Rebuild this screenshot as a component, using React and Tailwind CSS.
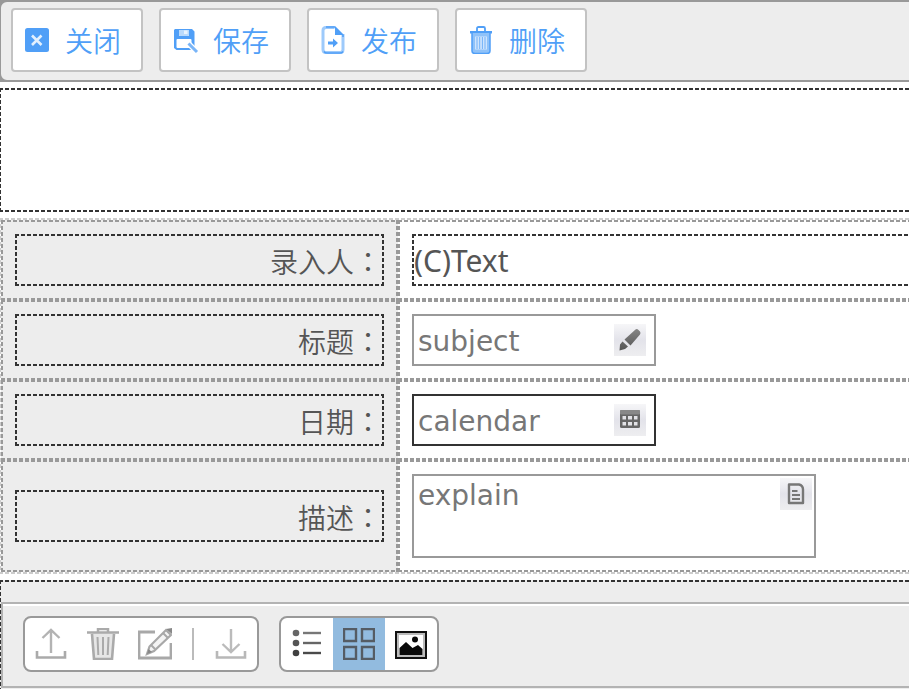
import React from "react";

const blue = "#509ff7";

function CloseIcon() {
  return (
    <svg width="24" height="24" viewBox="0 0 24 24" aria-hidden="true">
      <rect width="24" height="24" rx="2.5" fill={blue} />
      <path d="M7 7.5l9.5 9.5M16.500 7.500L7 17" stroke="#e3f0fe" strokeWidth="2.6" />
    </svg>
  );
}

function SaveIcon() {
  return (
    <svg width="24" height="24" viewBox="0 0 24 24" className="overflow-visible" aria-hidden="true">
      <path fill={blue} fillRule="evenodd" d="M2 1h17l2.500 2.500V19l-1 3H3.500L1 20V2zM6 2.500v4.500q0 1 1 1h8q1 0 1-1V2.500zM3.500 12v7q0 1 1 1h13q1 0 1-1v-7q0-1-1-1h-13q-1 0-1 1z" />
      <path d="M6 2h10v5q0 1-1 1H7q-1 0-1-1z" fill="#b9dafc" />
      <rect x="11" y="2.500" width="3.500" height="3.500" fill="#e8f3fe" />
      <path d="M14 14l10.500 10.500" stroke="#fff" strokeWidth="5.500" />
      <path d="M15.500 15.500l8.500 8.500" stroke="#79b5f8" strokeWidth="3" />
    </svg>
  );
}

function PublishIcon() {
  return (
    <svg width="24" height="28" viewBox="0 0 24 28" fill="none" aria-hidden="true">
      <path d="M13.500 1.500H5q-3 0-3 3v19q0 3 3 3h14q3 0 3-3V8" stroke="#9dcafb" strokeWidth="3" />
      <path d="M5 1h9l8 8v2M3 25.500q1 1.500 3 1.500h13q2 0 3-1.500" stroke={blue} strokeWidth="1.500" />
      <path d="M14 1v8h8z" fill={blue} />
      <path d="M7 15.500h5V12.500l5 4.500-5 4.500v-3H7z" fill={blue} />
    </svg>
  );
}

function DeleteIcon() {
  return (
    <svg width="24" height="28" viewBox="0 0 24 28" fill="none" aria-hidden="true">
      <path d="M8 5V2.500Q8 1 9.500 1h5Q16 1 16 2.500V5" stroke={blue} strokeWidth="1.800" />
      <path d="M1 5h22v2.500H1z" fill={blue} />
      <path d="M3 7h18v18q0 3-3 3H6q-3 0-3-3z" fill="#8fc2f9" />
      <path d="M3 7v18q0 2.500 3 2.500h12q3 0 3-2.500V7" stroke={blue} strokeWidth="1.500" />
      <path d="M6 10.500h12v13H6z" fill="#cfe4fd" />
      <path d="M8 11v12M10.700 11v12M13.400 11v12M16 11v12" stroke="#72b2f9" strokeWidth="1" />
    </svg>
  );
}

function PencilIcon() {
  return (
    <svg width="32" height="32" viewBox="0 0 32 32" aria-hidden="true">
      <defs>
        <linearGradient id="pencil" x1="0" y1="0" x2="0" y2="1">
          <stop offset="0" stopColor="#858585" />
          <stop offset="1" stopColor="#555" />
        </linearGradient>
      </defs>
      <path fill="url(#pencil)" d="M21.500 5.500q1.500-1 3 .5l1.500 1.500q1 1.500 0 3L16.500 21.500l-6-6zM8.500 17.500l5.500 5-3 2.500-5.500 1.500.5-6z" />
    </svg>
  );
}

function CalendarIcon() {
  return (
    <svg width="32" height="32" viewBox="0 0 32 32" aria-hidden="true">
      <rect x="6" y="6" width="20" height="18" rx="1.500" fill="#666" />
      <rect x="6" y="6" width="20" height="4.500" rx="1" fill="#888" />
      <path fill="#e2e2e6" d="M8.500 12h3.500v3.500H8.500zM14 12h4v3.500h-4zM20 12h3.500v3.500H20zM8.500 18h3.500v3.500H8.500zM14 18h4v3.500h-4zM20 18h3.500v3.500H20z" />
    </svg>
  );
}

function NoteIcon() {
  return (
    <svg width="32" height="32" viewBox="0 0 32 32" fill="none" stroke="#777" aria-hidden="true">
      <path d="M9 6.500h10q4 1 4 5v13.500H9z" strokeWidth="2.400" strokeLinejoin="round" />
      <path d="M12 13h5.500M12 17h8M12 21h8" strokeWidth="2" />
    </svg>
  );
}

function UploadIcon() {
  return (
    <svg width="32" height="32" viewBox="0 0 32 32" fill="none" aria-hidden="true">
      <path d="M16 25V2M7.500 10L16 2l8.500 8" stroke="#b3b3b3" strokeWidth="2.400" />
      <path d="M2 23v6.500h28V23" stroke="#aaa" strokeWidth="2.600" />
    </svg>
  );
}

function TrashIcon() {
  return (
    <svg width="32" height="32" viewBox="0 0 32 32" fill="none" stroke="#aaa" aria-hidden="true">
      <path d="M5 5h22l-2 26H7z" fill="#e6e6e6" stroke="none" />
      <path d="M0 4.500h32" strokeWidth="2.500" />
      <path d="M11 4V1h10v3" strokeWidth="2.500" />
      <path d="M5 6l2 25h18l2-25" strokeWidth="2.600" />
      <path d="M10.500 9l.8 18M16 9v18M21.500 9l-.8 18" strokeWidth="2" />
    </svg>
  );
}

function EditIcon() {
  return (
    <svg width="34" height="32" viewBox="0 0 34 32" fill="none" stroke="#a8a8a8" aria-hidden="true">
      <path d="M17 4H1v26h32V15" strokeWidth="2.800" />
      <path d="M28 2l5 5-17 16-7 3 2.500-7.500z" fill="#f4f4f4" strokeWidth="2.200" />
      <path d="M25 5l5 5M13 17l4 4" strokeWidth="2" />
      <path d="M9 26l1.500-5 3.500 3zM28 1l6 5V0z" fill="#888" stroke="none" />
    </svg>
  );
}

function DownloadIcon() {
  return (
    <svg width="32" height="32" viewBox="0 0 32 32" fill="none" aria-hidden="true">
      <path d="M16 1v23M7.500 16l8.500 8 8.500-8" stroke="#bbb" strokeWidth="2.400" />
      <path d="M2 23v6.500h28V23" stroke="#b8b8b8" strokeWidth="2.600" />
    </svg>
  );
}

function ListIcon() {
  return (
    <svg width="32" height="32" viewBox="0 0 32 32" aria-hidden="true">
      <g fill="#555">
        <circle cx="5" cy="5" r="3.300" fill="#666" />
        <circle cx="5" cy="15" r="3.300" />
        <circle cx="5" cy="25" r="3.300" fill="#404040" />
      </g>
      <path d="M12 5h18" stroke="#777" strokeWidth="2.400" />
      <path d="M12 15h18" stroke="#666" strokeWidth="2.400" />
      <path d="M12 25h18" stroke="#4a4a4a" strokeWidth="2.400" />
    </svg>
  );
}

function GridIcon() {
  return (
    <svg width="32" height="32" viewBox="0 0 32 32" fill="none" stroke="#555c64" strokeWidth="2.400" aria-hidden="true">
      <path d="M1 1h12v12H1zM19 1h12v12H19zM1 19h12v12H1zM19 19h12v12H19z" />
    </svg>
  );
}

function ImageIcon() {
  return (
    <svg width="32" height="32" viewBox="0 0 32 32" aria-hidden="true">
      <rect x="1" y="4" width="30" height="26" fill="#fff" stroke="#111" strokeWidth="2" />
      <rect x="3" y="6" width="26" height="22" fill="none" stroke="#bbb" strokeWidth="2" />
      <path d="M4.500 27V20l6.500-6 6.500 6 5.500-3 4.500 4v6z" fill="#0a0a0a" />
      <circle cx="20" cy="11.500" r="3" fill="#0a0a0a" />
    </svg>
  );
}

// Fine 4px-on, 2px-off dashes on all four sides, in the colour held by --dash.
const dashed =
  "border-2 border-transparent bg-origin-border bg-no-repeat [background-image:repeating-linear-gradient(90deg,var(--dash)_0_4px,transparent_4px_6px),repeating-linear-gradient(90deg,var(--dash)_0_4px,transparent_4px_6px),repeating-linear-gradient(180deg,var(--dash)_0_4px,transparent_4px_6px),repeating-linear-gradient(180deg,var(--dash)_0_4px,transparent_4px_6px)] [background-size:100%_2px,100%_2px,2px_100%,2px_100%] [background-position:top,bottom,left,right]";
const dark = `${dashed} [--dash:#333]`;
const mid = `${dashed} [--dash:#999]`;
const light = `${dashed} [--dash:#ccc]`;

const actions = [
  { text: "关闭", Icon: CloseIcon },
  { text: "保存", Icon: SaveIcon },
  { text: "发布", Icon: PublishIcon },
  { text: "删除", Icon: DeleteIcon },
];

function Row({ label, htmlFor, children }) {
  return (
    <tr>
      <th scope="row" className={`${mid} bg-[#ededed] p-3 text-right align-middle font-[350]`}>
        <label htmlFor={htmlFor} className={`${dark} block h-[52px] text-[28px] leading-[50px] text-[#555]`}>
          {label}
          <span className="font-['Noto_Sans_CJK_TC',sans-serif]">：</span>
        </label>
      </th>
      <td className={`${mid} p-3 align-top`}>{children}</td>
    </tr>
  );
}

function FieldButton({ label, children }) {
  return (
    <button type="button" aria-label={label} className="size-8 shrink-0 bg-linear-to-b from-[#f6f6f8] via-[#e3e3ea] to-[#eeeef0]">
      {children}
    </button>
  );
}

function ToolButton({ label, pressed, children }) {
  return (
    <button
      type="button"
      aria-label={label}
      aria-pressed={pressed}
      className="flex size-[52px] items-center justify-center aria-pressed:bg-[#92bbdf]"
    >
      {children}
    </button>
  );
}

const fieldText =
  "min-w-0 flex-1 bg-transparent px-1 pt-1 font-['DejaVu_Sans',sans-serif] text-[28px] text-[#555] outline-none placeholder:text-[#777]";

export default function App() {
  return (
    <div className="h-screen overflow-hidden bg-white font-['Noto_Sans','Noto_Sans_CJK_SC',sans-serif]">
      <main className="-mr-8 -ml-px flex flex-col gap-1.5">
        <div className="bg-[#999]">
          <div role="toolbar" className="flex gap-4 rounded-lg border-2 border-[#999] bg-[#ededed] px-2.5 pt-1.5 pb-2">
            {actions.map(({ text, Icon }) => (
              <button
                key={text}
                type="button"
                className="flex h-16 w-[132px] items-center gap-4 rounded border-2 border-[#c3c3c3] bg-white px-3 text-[28px] font-[350] text-[#509ff7]"
              >
                <Icon />
                <span className="pt-0.5">{text}</span>
              </button>
            ))}
          </div>
        </div>

        <div className={`${dark} h-[124px]`} />

        <div className={light}>
          <table className="w-full table-fixed border-separate border-spacing-0">
            <colgroup>
              <col className="w-[397px]" />
              <col />
            </colgroup>
            <tbody>
              <Row label="录入人">
                <div className={`${dark} h-[52px] text-[30px] leading-[50px] text-[#555]`}>(C)Text</div>
              </Row>
              <Row label="标题" htmlFor="subject">
                <div className="flex h-[52px] w-[244px] items-center border-2 border-[#999] pr-2">
                  <input id="subject" type="text" placeholder="subject" className={fieldText} />
                  <FieldButton label="标题"><PencilIcon /></FieldButton>
                </div>
              </Row>
              <Row label="日期" htmlFor="calendar">
                <div className="flex h-[52px] w-[244px] items-center border-2 border-[#333] pr-2">
                  <input id="calendar" type="text" placeholder="calendar" className={fieldText} />
                  <FieldButton label="日期"><CalendarIcon /></FieldButton>
                </div>
              </Row>
              <Row label="描述" htmlFor="explain">
                <div className="flex h-[84px] w-[404px] items-start border-2 border-[#999] pt-0.5 pr-0.5">
                  <textarea id="explain" rows={2} placeholder="explain" className={`${fieldText} h-full resize-none leading-7`} />
                  <FieldButton label="描述"><NoteIcon /></FieldButton>
                </div>
              </Row>
            </tbody>
          </table>
        </div>

        <section className={`${dark} bg-[#ededed] py-5`}>
          <div className="border-2 border-[#b3b3b3]">
            <div className="flex gap-5 border-t-2 border-white px-5 pt-2.5 pb-3.5">
              <div className="flex items-center rounded-lg border-2 border-[#999] bg-white">
                <ToolButton label="上传"><UploadIcon /></ToolButton>
                <ToolButton label="删除文件"><TrashIcon /></ToolButton>
                <ToolButton label="编辑"><EditIcon /></ToolButton>
                <div className="mx-[11px] h-8 w-0.5 bg-[#bbb]" />
                <ToolButton label="下载"><DownloadIcon /></ToolButton>
              </div>
              <div className="flex items-center rounded-lg border-2 border-[#999] bg-white">
                <ToolButton label="列表" pressed={false}><ListIcon /></ToolButton>
                <ToolButton label="缩略图" pressed={true}><GridIcon /></ToolButton>
                <ToolButton label="图片" pressed={false}><ImageIcon /></ToolButton>
              </div>
            </div>
          </div>
        </section>
      </main>
    </div>
  );
}
